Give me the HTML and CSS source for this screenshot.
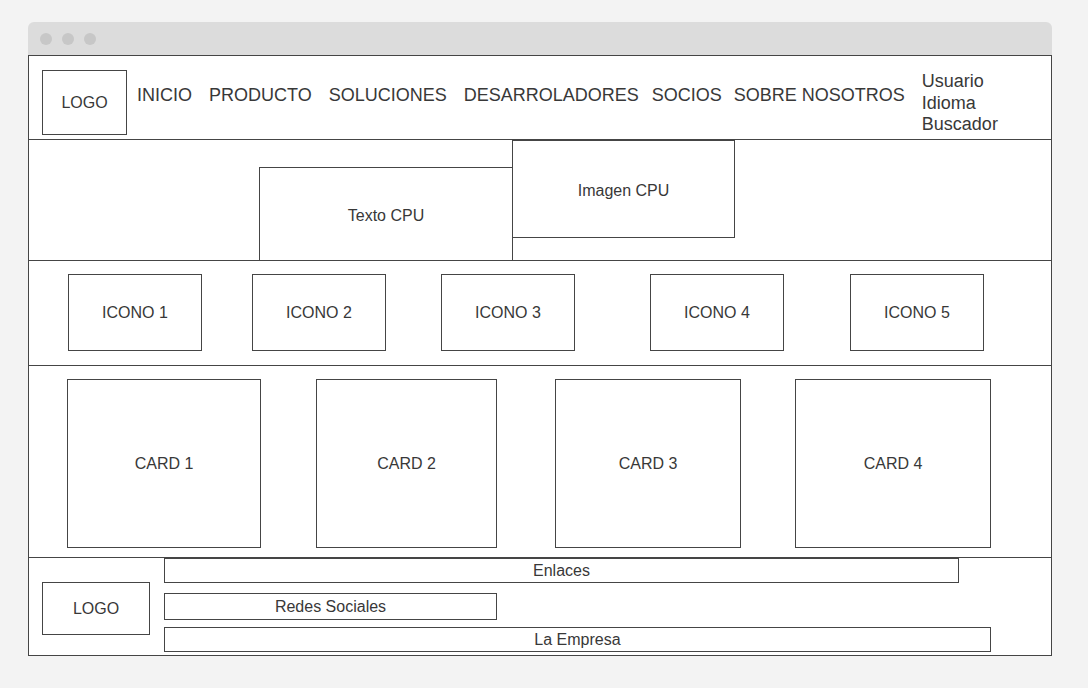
FILE: index.html
```html
<!DOCTYPE html>
<html lang="es">
<head>
<meta charset="utf-8">
<title>Wireframe CPU</title>
<link rel="stylesheet" href="styles.css">
</head>
<body>
<div class="window">
  <div class="titlebar">
    <span class="dot"></span><span class="dot"></span><span class="dot"></span>
  </div>
  <div class="page">
    <header class="site-header">
      <div class="box logo">LOGO</div>
      <nav class="nav">
        <a class="nav-link">INICIO</a>
        <a class="nav-link">PRODUCTO</a>
        <a class="nav-link">SOLUCIONES</a>
        <a class="nav-link nav-link-mid">DESARROLADORES</a>
        <a class="nav-link nav-link-tight">SOCIOS</a>
        <a class="nav-link">SOBRE NOSOTROS</a>
      </nav>
      <div class="user-tools">
        <span>Usuario</span>
        <span>Idioma</span>
        <span>Buscador</span>
      </div>
    </header>

    <section class="hero">
      <div class="box hero-text">Texto CPU</div>
      <div class="box hero-image">Imagen CPU</div>
    </section>

    <section class="icons">
      <div class="box icon icon-1">ICONO 1</div>
      <div class="box icon icon-2">ICONO 2</div>
      <div class="box icon icon-3">ICONO 3</div>
      <div class="box icon icon-4">ICONO 4</div>
      <div class="box icon icon-5">ICONO 5</div>
    </section>

    <section class="cards">
      <div class="box card card-1">CARD 1</div>
      <div class="box card card-2">CARD 2</div>
      <div class="box card card-3">CARD 3</div>
      <div class="box card card-4">CARD 4</div>
    </section>

    <footer class="site-footer">
      <div class="box footer-logo">LOGO</div>
      <div class="footer-links">
        <div class="box footer-enlaces">Enlaces</div>
        <div class="box footer-redes">Redes Sociales</div>
        <div class="box footer-empresa">La Empresa</div>
      </div>
    </footer>
  </div>
</div>
</body>
</html>
```
FILE: styles.css
```css
* {
  box-sizing: border-box;
}

body {
  margin: 0;
  padding: 22px 0 0 28px;
  background: #f3f3f3;
  font-family: "Liberation Sans", Arial, sans-serif;
  color: #383838;
}

.window {
  width: 1024px;
}

.titlebar {
  height: 33px;
  background: #dcdcdc;
  border-radius: 6px 6px 0 0;
  display: flex;
  align-items: center;
  gap: 10px;
  padding-left: 12px;
}

.dot {
  width: 12px;
  height: 12px;
  border-radius: 50%;
  background: #c7c7c7;
}

.page {
  background: #ffffff;
  border: 1px solid #454545;
  height: 601px;
}

.box {
  border: 1px solid #454545;
  background: #ffffff;
  display: flex;
  align-items: center;
  justify-content: center;
  font-size: 16px;
  white-space: nowrap;
}

/* Header */
.site-header {
  height: 84px;
  border-bottom: 1px solid #454545;
  display: flex;
  align-items: flex-start;
  padding: 14px 0 0 13px;
}

.logo {
  width: 85px;
  height: 65px;
}

.nav {
  display: flex;
  margin: 15px 0 0 10px;
}

.nav-link {
  font-size: 18px;
  line-height: 21px;
  margin-right: 17px;
  color: #383838;
}

.nav-link-mid {
  margin-right: 13px;
}

.nav-link-tight {
  margin-right: 12px;
}

.user-tools {
  display: flex;
  flex-direction: column;
  font-size: 18px;
  line-height: 21.6px;
  margin-top: 1px;
}

/* Hero */
.hero {
  height: 121px;
  border-bottom: 1px solid #454545;
  display: flex;
  align-items: flex-start;
}

.hero-text {
  width: 254px;
  height: 93px;
  margin: 27px 0 0 230px;
  border-bottom: none;
  padding-top: 4px;
}

.hero-image {
  width: 223px;
  height: 98px;
  margin-left: -1px;
  padding-top: 4px;
}

/* Icons */
.icons {
  height: 105px;
  border-bottom: 1px solid #454545;
  display: flex;
  align-items: flex-start;
  padding-top: 13px;
}

.icon {
  width: 134px;
  height: 77px;
}

.icon-1 { margin-left: 39px; }
.icon-2 { margin-left: 50px; }
.icon-3 { margin-left: 55px; }
.icon-4 { margin-left: 75px; }
.icon-5 { margin-left: 66px; }

/* Cards */
.cards {
  height: 192px;
  border-bottom: 1px solid #454545;
  display: flex;
  align-items: flex-start;
  padding-top: 13px;
}

.card {
  height: 169px;
}

.card-1 { width: 194px; margin-left: 38px; }
.card-2 { width: 181px; margin-left: 55px; }
.card-3 { width: 186px; margin-left: 58px; }
.card-4 { width: 196px; margin-left: 54px; }

/* Footer */
.site-footer {
  display: flex;
  align-items: flex-start;
  padding-left: 13px;
}

.footer-logo {
  width: 108px;
  height: 53px;
  margin-top: 24px;
}

.footer-links {
  display: flex;
  flex-direction: column;
  align-items: flex-start;
  margin-left: 14px;
}

.footer-enlaces {
  width: 795px;
  height: 25px;
}

.footer-redes {
  width: 333px;
  height: 27px;
  margin-top: 10px;
}

.footer-empresa {
  width: 827px;
  height: 25px;
  margin-top: 7px;
}
```
